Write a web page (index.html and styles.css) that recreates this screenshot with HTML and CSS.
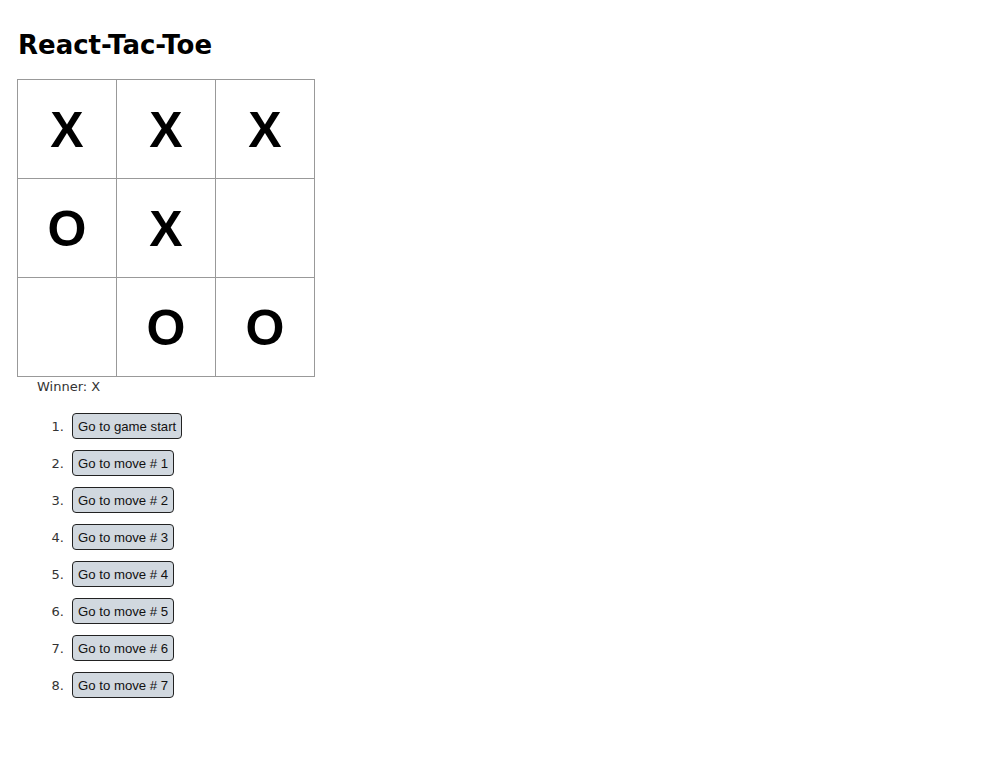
FILE: index.html
```html
<!DOCTYPE html>
<html>
<head>
<meta charset="utf-8">
<link rel="stylesheet" href="styles.css">
</head>
<body>
<div class="game">
  <h1 class="title">React-Tac-Toe</h1>
  <div class="board">
    <div class="square">X</div>
    <div class="square">X</div>
    <div class="square">X</div>
    <div class="square">O</div>
    <div class="square">X</div>
    <div class="square"></div>
    <div class="square"></div>
    <div class="square">O</div>
    <div class="square">O</div>
  </div>
  <div class="status">Winner: X</div>
  <ol class="moves">
    <li><button class="move">Go to game start</button></li>
    <li><button class="move">Go to move # 1</button></li>
    <li><button class="move">Go to move # 2</button></li>
    <li><button class="move">Go to move # 3</button></li>
    <li><button class="move">Go to move # 4</button></li>
    <li><button class="move">Go to move # 5</button></li>
    <li><button class="move">Go to move # 6</button></li>
    <li><button class="move">Go to move # 7</button></li>
  </ol>
</div>
</body>
</html>
```
FILE: styles.css
```css
html, body {
  margin: 0;
  padding: 0;
  background: #fff;
}
body {
  font-family: "DejaVu Sans", "Liberation Sans", sans-serif;
  color: #000;
}
.game {
  padding: 24px 17px;
}
.title {
  margin: 4px 0 0 1px;
  font-size: 26px;
  font-weight: bold;
  line-height: 34px;
  letter-spacing: 0;
}
.board {
  margin-top: 17px;
  display: grid;
  grid-template-columns: repeat(3, 99px);
  grid-auto-rows: 99px;
  width: max-content;
  border-top: 1px solid #999;
  border-left: 1px solid #999;
}
.square {
  border-right: 1px solid #999;
  border-bottom: 1px solid #999;
  display: flex;
  align-items: center;
  justify-content: center;
  font-family: "Liberation Sans", Arial, sans-serif;
  font-size: 50px;
  font-weight: bold;
  padding-top: 2px;
}
.status {
  margin: 1px 0 0 20px;
  font-size: 13px;
  color: #333;
  line-height: 18px;
}
.moves {
  margin: 17px 0 0 0;
  padding-left: 51px;
  font-size: 13px;
  color: #333;
}
.moves li {
  height: 37px;
  padding-left: 4px;
}
.move {
  font-family: "Liberation Sans", Arial, sans-serif;
  font-size: 13.2px;
  color: #111;
  background: #d1d8df;
  border: 1px solid #222;
  border-radius: 4px;
  padding: 4px 5px;
  height: 26px;
}
```
